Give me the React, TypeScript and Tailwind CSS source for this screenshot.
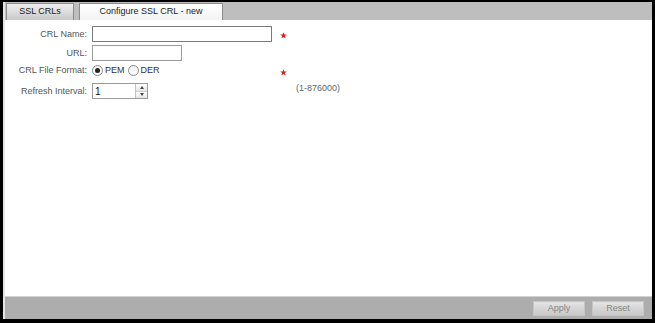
import { useState } from 'react'

const Star = ({ className = '' }: { className?: string }) => (
    <svg width="7" height="7" viewBox="0 0 7 7" className={className}>
        <path d="M3.5 0.2 L4.4 2.4 L6.8 2.5 L4.9 4 L5.6 6.5 L3.5 5.1 L1.4 6.5 L2.1 4 L0.2 2.5 L2.6 2.4 Z" fill="#e51c1c" />
    </svg>
)

const Radio = ({ checked, label, onClick }: { checked: boolean; label: string; onClick: () => void }) => (
    <label className="flex items-center gap-[2px] cursor-pointer" onClick={onClick}>
        <span className="w-[11px] h-[11px] rounded-full border border-[#8a8a8a] bg-gradient-to-b from-[#f2f2f2] to-white flex items-center justify-center">
            {checked && <span className="w-[5px] h-[5px] rounded-full bg-[#222]" />}
        </span>
        <span className="text-[#333]">{label}</span>
    </label>
)

const App = () => {
    const [format, setFormat] = useState('PEM')

    return (
        <div className="w-[655px] h-[323px] bg-black pt-[2px] pl-[3px] pr-[3px] pb-[4px] font-['Liberation_Sans',Arial,sans-serif] text-[9px] text-[#555]">
            <div className="h-full flex flex-col bg-white border-l-2 border-[#e4e4e4]">
                <div className="h-[18px] bg-[#bebebe] flex items-end pl-px gap-[5px]">
                    <div className="w-[68px] h-[17px] flex items-center justify-center border border-[#8c8c8c] border-b-0 bg-gradient-to-b from-[#efefef] to-[#c9c9c9] text-[#222]">
                        SSL CRLs
                    </div>
                    <div className="w-[144px] h-[17px] flex items-center justify-center border border-[#8c8c8c] border-b-0 bg-gradient-to-b from-white to-[#f3f3f3] text-[#222]">
                        Configure SSL CRL - new
                    </div>
                </div>

                <div className="flex-1 pt-[6px]">
                    <div className="grid grid-cols-[82px_auto] gap-x-[5px] items-center">
                        <div className="text-right h-[16px] leading-[16px]">CRL Name:</div>
                        <div className="flex items-center h-[16px]">
                            <input className="w-[180px] h-[16px] border border-[#7a7a7a] outline-none px-1" />
                            <Star className="ml-[8px] mt-[2px]" />
                        </div>

                        <div className="text-right h-[16px] leading-[16px] mt-[3px]">URL:</div>
                        <div className="h-[16px] mt-[3px]">
                            <input className="w-[90px] h-[16px] border border-[#9a9a9a] outline-none px-1" />
                        </div>

                        <div className="text-right h-[17px] leading-[17px] mt-px">CRL File Format:</div>
                        <div className="flex items-center h-[17px] mt-px">
                            <div className="w-[188px] flex items-center gap-[3px]">
                                <Radio checked={format === 'PEM'} label="PEM" onClick={() => setFormat('PEM')} />
                                <Radio checked={format === 'DER'} label="DER" onClick={() => setFormat('DER')} />
                            </div>
                            <Star className="mt-[4px]" />
                        </div>

                        <div className="text-right h-[16px] leading-[16px] mt-[4px]">Refresh Interval:</div>
                        <div className="flex items-center h-[16px] mt-[4px]">
                            <div className="w-[56px] h-[16px] border border-[#9a9a9a] flex">
                                <input defaultValue="1" className="flex-1 min-w-0 outline-none px-[2px] text-[10px] text-[#111]" />
                                <div className="w-[12px] flex flex-col border-l border-[#c4c4c4]">
                                    <div className="flex-1 flex items-center justify-center bg-gradient-to-b from-white to-[#e6e6e6] border-b border-[#cfcfcf]">
                                        <span className="w-0 h-0 border-x-[2px] border-x-transparent border-b-[3px] border-b-[#444]" />
                                    </div>
                                    <div className="flex-1 flex items-center justify-center bg-gradient-to-b from-white to-[#e6e6e6]">
                                        <span className="w-0 h-0 border-x-[2px] border-x-transparent border-t-[3px] border-t-[#444]" />
                                    </div>
                                </div>
                            </div>
                            <span className="ml-[148px] mb-[4px] text-[#666]">(1-876000)</span>
                        </div>
                    </div>
                </div>

                <div className="h-[23px] bg-[#adadad] border-t border-[#d2d2d2] flex items-center justify-end gap-[7px] pr-[8px]">
                    <button className="w-[52px] h-[15px] border border-[#c6c6c6] bg-gradient-to-b from-[#e4e4e4] to-[#c8c8c8] text-[#858585] leading-none">Apply</button>
                    <button className="w-[52px] h-[15px] border border-[#c6c6c6] bg-gradient-to-b from-[#e4e4e4] to-[#c8c8c8] text-[#858585] leading-none">Reset</button>
                </div>
            </div>
        </div>
    )
}

export default App
